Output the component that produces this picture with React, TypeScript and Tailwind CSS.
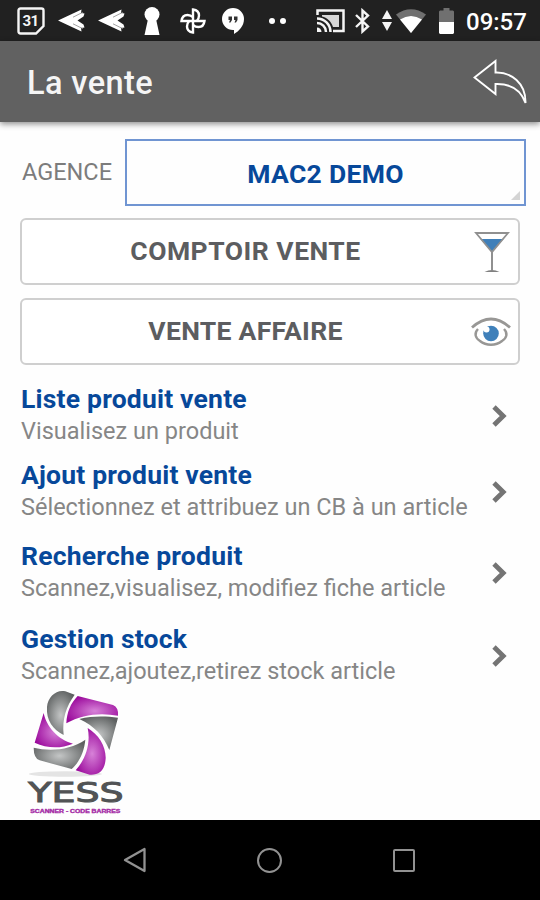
import type { ReactNode } from 'react'

const menu = [
  { title: 'Liste produit vente', text: 'Visualisez un produit', height: 'h-[76px]' },
  { title: 'Ajout produit vente', text: 'Sélectionnez et attribuez un CB à un article', height: 'h-[81px]' },
  { title: 'Recherche produit', text: 'Scannez,visualisez, modifiez fiche article', height: 'h-[83px]' },
  { title: 'Gestion stock', text: 'Scannez,ajoutez,retirez stock article', height: 'h-[65px]' },
]

function SendArrow() {
  return (
    <svg viewBox="0 0 27 23" className="ml-[13px] h-[23px] w-[27px] shrink-0">
      <path d="M0 11.500 23.500 0.500 23 4 26.500 4.500 25.500 7.500 19.500 11.500 25.500 15.500 26.500 18.500 23 19 23.500 22.500Z" fill="#fff" />
      <path d="M15 8.200 25 3.200M15 14.800 25 19.800" stroke="#8a8a8a" strokeWidth="0.800" />
    </svg>
  )
}

function StatusBar() {
  return (
    <div className="flex h-[41px] shrink-0 items-center bg-[#212121] text-white">
      <svg viewBox="0 0 28 28" className="ml-[17px] h-7 w-7 shrink-0" fill="none" stroke="#f5f5f5" strokeWidth="2.400">
        <path d="M3.500 1.500h21q2 0 2 2V19l-7.500 7.500h-15.500q-2 0-2-2v-21q0-2 2-2z" />
        <text x="5.500" y="19" textLength="16.500" fontSize="15" fontWeight="700" fill="#f5f5f5" stroke="none" className="font-['Roboto',sans-serif]">31</text>
      </svg>
      <SendArrow />
      <SendArrow />
      <svg viewBox="0 0 16 28" className="ml-[19px] h-7 w-4 shrink-0" fill="#fff">
        <circle cx="8" cy="7.500" r="7.500" />
        <path d="M4 12h8L15.500 28H.5z" />
      </svg>
      <svg viewBox="0 0 26 26" className="ml-5 h-[26px] w-[26px] shrink-0" fill="none" stroke="#fff" strokeWidth="2.400">
        <path d="M13 13V1.500C17 2 19 4.500 19 7.500c0 2-.8 4-2.200 5.500" />
        <path d="M13 13h11.500c-.5 4-3 6-6 6-2 0-4-.8-5.500-2.200" />
        <path d="M13 13v11.500c-4-.5-6-3-6-6 0-2 .8-4 2.200-5.500" />
        <path d="M13 13H1.500C2 9 4.500 7 7.500 7c2 0 4 .8 5.500 2.200" />
      </svg>
      <svg viewBox="0 0 22 26" className="ml-4 h-[26px] w-[22px] shrink-0">
        <path d="M11 0a11 11 0 0 1 11 11c0 7-5 12-10 15v-4h-1A11 11 0 0 1 11 0z" fill="#fff" />
        <path d="M6.500 8.500h3.500v3.500l-1.500 2.500H7L8 12H6.500zM12 8.500h3.500v3.500l-1.500 2.500h-1.500l1-2.500H12z" fill="#333" />
      </svg>
      <div className="ml-[25px] flex gap-[5px]">
        <span className="h-[6px] w-[6px] rounded-sm bg-white" />
        <span className="h-[6px] w-[6px] rounded-sm bg-white" />
      </div>
      <svg viewBox="0 0 29 24" className="ml-[30px] h-6 w-[29px] shrink-0" fill="none" stroke="#f5f5f5" strokeWidth="2.500">
        <path d="M1.500 6V1.500h26v20.500H17" />
        <path d="M6 6h17v12h-6C15 12 11 8.500 6 7.500z" fill="#d8d8d8" stroke="none" />
        <path d="M1 9.500A13.500 13.500 0 0 1 14.500 23M1 14A9 9 0 0 1 10 23" />
        <path d="M1 18.500A4.500 4.500 0 0 1 5.500 23H1z" fill="#f5f5f5" stroke="none" />
      </svg>
      <svg viewBox="0 0 15 26" className="ml-[10px] h-[26px] w-[15px] shrink-0" fill="none" stroke="#f5f5f5" strokeWidth="2.400">
        <path d="M1 7 13 18.500 7.500 23.500V2.500L13 7.500 1 19" />
      </svg>
      <svg viewBox="0 0 10 21" className="ml-3 h-[21px] w-[10px] shrink-0" fill="#f5f5f5">
        <path d="M5 0 10 9H0zM0 12h10L5 21z" />
      </svg>
      <svg viewBox="0 0 30 24" className="ml-1 h-6 w-[30px] shrink-0">
        <path d="M0 5.500Q15-5 30 5.500L15 24z" fill="#707070" />
        <path d="M4 10.500Q15 3.500 26 10.500L15 24z" fill="#fff" />
      </svg>
      <svg viewBox="0 0 15 26" className="ml-[13px] h-[26px] w-[15px] shrink-0">
        <path d="M4.500 0h6v2.500H14l1 1V14H0V3.500l1-1h3.500z" fill="#707070" />
        <path d="M0 14h15v11l-1 1H1l-1-1z" fill="#fff" />
      </svg>
      <span className="mt-[2px] ml-3 text-[24px] leading-none font-medium whitespace-nowrap">09:57</span>
    </div>
  )
}

function OutlineButton({ label, className, children }: { label: string; className: string; children: ReactNode }) {
  return (
    <button className={`ml-5 flex h-[67px] w-[500px] items-center rounded-[6px] border-2 border-[#cfcfcf] bg-white ${className}`}>
      <span className="w-[447px] text-center text-[26.5px] leading-none font-bold text-[#5c5d60]">{label}</span>
      {children}
    </button>
  )
}

function Logo() {
  return (
    <svg viewBox="50 25 300 381" className="ml-[27px] h-[127px] w-[100px]">
      <defs>
        <radialGradient id="grey" cx="50%" cy="55%" r="60%">
          <stop offset="0" stopColor="#c4c6c6" />
          <stop offset="1" stopColor="#5e6161" />
        </radialGradient>
        <radialGradient id="purple" cx="55%" cy="55%" r="60%">
          <stop offset="0" stopColor="#d782d8" />
          <stop offset="1" stopColor="#9a089b" />
        </radialGradient>
      </defs>
      <ellipse cx="165" cy="283" rx="110" ry="8" fill="#e4e4e4" />
      <path d="M110 82C112 50 140 28 165 35L193 45C168 80 155 115 160 166 128 150 107 122 110 82z" fill="url(#grey)" />
      <path d="M168 131C170 98 180 72 202 49L308 76Q325 83 323 108C270 98 215 104 168 131z" fill="url(#purple)" />
      <path d="M207 118C248 108 288 110 323 114L297 211C280 170 252 138 207 118z" fill="url(#grey)" />
      <path d="M232 145C265 165 287 200 286 236 284 276 262 287 238 285L196 272C225 240 242 192 232 145z" fill="url(#purple)" />
      <path d="M225 180C222 215 206 250 184 268L88 242Q70 236 70 204C120 216 180 211 225 180z" fill="url(#grey)" />
      <path d="M100 100C108 140 142 180 188 192 150 208 110 206 73 189z" fill="url(#purple)" />
      <text x="54" y="366" fontSize="82" textLength="286" lengthAdjust="spacingAndGlyphs" fill="#515355" stroke="#515355" strokeWidth="3" className="font-['DejaVu_Sans',sans-serif]">YESS</text>
      <text x="60" y="399" fontSize="15" fontWeight="700" textLength="270" lengthAdjust="spacingAndGlyphs" fill="#a52ba6" stroke="#a52ba6" strokeWidth="1" className="font-['Liberation_Sans',sans-serif]">SCANNER - CODE BARRES</text>
    </svg>
  )
}

export default function App() {
  return (
    <div className="flex h-[900px] w-[540px] flex-col overflow-hidden bg-[#fefefe] font-['Roboto',sans-serif]">
      <StatusBar />
      <header className="flex h-[81px] shrink-0 items-center justify-between bg-[#616161] pr-[13px] pl-[27px] shadow-[0_2px_6px_rgba(0,0,0,0.45)]">
        <h1 className="mt-[3px] text-[32.5px] leading-none font-medium tracking-[0.4px] text-[#f5f5f5]">La vente</h1>
        <svg viewBox="0 0 54 46" className="h-[46px] w-[54px]" fill="none" stroke="#fff" strokeWidth="1.900">
          <path d="M1.500 18.500 22.500 2V13.500C38 13 53 24 52.500 44 48 31 38 24.500 22.500 25V35z" />
        </svg>
      </header>

      <main className="flex h-[698px] shrink-0 flex-col">
        <div className="mt-[17px] flex h-[67px] items-center">
          <span className="ml-[22px] w-[103px] text-[23.5px] leading-none text-[#7c7c7c]">AGENCE</span>
          <div className="relative flex h-[67px] w-[401px] items-center justify-center border-2 border-[#7095d2] pt-[3px] text-[26.5px] leading-none font-bold tracking-[0.3px] text-[#07489a]">
            MAC2 DEMO
            <svg viewBox="0 0 9 9" className="absolute right-1 bottom-1 h-[9px] w-[9px]">
              <path d="M9 0V9H0z" fill="#d4d4d4" />
            </svg>
          </div>
        </div>

        <OutlineButton label="COMPTOIR VENTE" className="mt-3 tracking-[0.5px]">
          <svg viewBox="0 0 36 42" className="ml-[5px] h-[42px] w-9">
            <path d="M6.500 8h23L18 21z" fill="#3f7fb9" />
            <path d="M2 2h32L18 21z" fill="none" stroke="#909090" strokeWidth="1.800" />
            <path d="M18 21V39" stroke="#909090" strokeWidth="2" />
            <path d="M10.500 41Q18 37 25.500 41z" fill="#808080" />
          </svg>
        </OutlineButton>
        <OutlineButton label="VENTE AFFAIRE" className="mt-[13px] tracking-[0.3px]">
          <svg viewBox="0 0 40 30" className="ml-[2px] h-[30px] w-10" fill="none" stroke="#989795">
            <path d="M1 10.500Q20-6.500 39 10.500" strokeWidth="2.800" />
            <path d="M7 12C3 16 4 21 9 24 15 29 25 29 31 24 36 21 37 16 33 12" strokeWidth="2.400" />
            <circle cx="20" cy="16.500" r="7.800" fill="#3f80ba" stroke="none" />
            <circle cx="15.500" cy="12.500" r="3" fill="#fff" stroke="none" />
          </svg>
        </OutlineButton>

        <ul className="mt-[18px]">
          {menu.map((item) => (
            <li key={item.title} className={`flex items-start pl-[21px] ${item.height}`}>
              <div className="w-[470px] whitespace-nowrap">
                <p className="text-[26.5px] leading-[32px] font-bold tracking-[0.2px] text-[#07489a]">{item.title}</p>
                <p className="text-[23.5px] leading-[32px] text-[#868686]">{item.text}</p>
              </div>
              <svg viewBox="0 0 16 22" className="mt-[22px] h-[22px] w-4" fill="none" stroke="#747474" strokeWidth="4.800">
                <path d="M3 2 12.200 11 3 20" />
              </svg>
            </li>
          ))}
        </ul>
        <Logo />
      </main>

      <nav className="flex h-20 shrink-0 items-center bg-black">
        <svg viewBox="0 0 24 26" className="ml-[123px] h-[26px] w-6" fill="none" stroke="#929292" strokeWidth="2.300">
          <path d="M2 13 21.500 2V24z" strokeLinejoin="round" />
        </svg>
        <span className="ml-[110px] h-[25px] w-[25px] rounded-full border-2 border-[#929292]" />
        <span className="ml-[111px] h-[23px] w-[22px] rounded-[2px] border-2 border-[#929292]" />
      </nav>
    </div>
  )
}
